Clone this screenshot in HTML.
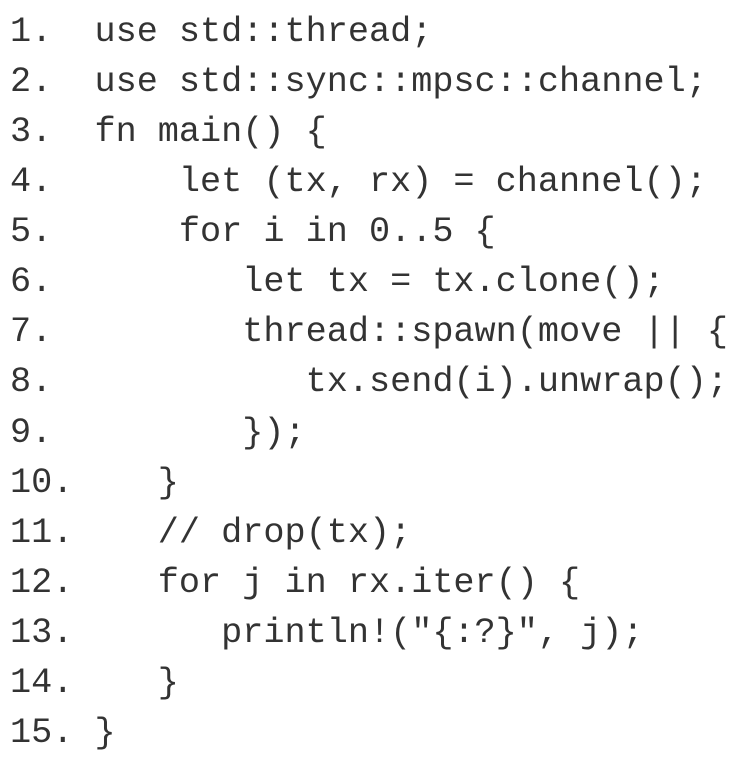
<!DOCTYPE html>
<html><head><meta charset="utf-8"><style>
html,body{margin:0;padding:0;background:#fff;width:742px;height:751px;overflow:hidden}
pre{margin:0;position:absolute;left:10px;top:7px;font-family:"Liberation Mono",monospace;font-size:35.2px;line-height:50.07px;color:#333;font-weight:normal}
</style></head><body><pre>1.  use std::thread;
2.  use std::sync::mpsc::channel;
3.  fn main() {
4.      let (tx, rx) = channel();
5.      for i in 0..5 {
6.         let tx = tx.clone();
7.         thread::spawn(move || {
8.            tx.send(i).unwrap();
9.         });
10.    }
11.    // drop(tx);
12.    for j in rx.iter() {
13.       println!("{:?}", j);
14.    }
15. }</pre></body></html>
